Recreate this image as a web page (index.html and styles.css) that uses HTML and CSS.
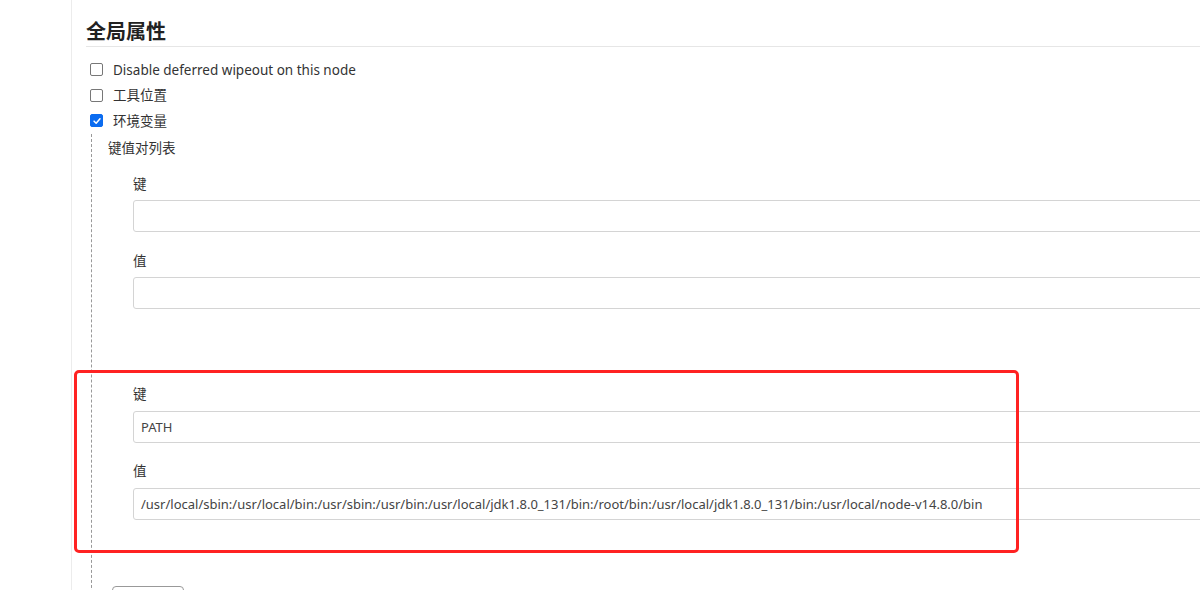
FILE: index.html
```html
<!DOCTYPE html>
<html lang="zh">
<head>
<meta charset="utf-8">
<title>全局属性</title>
<link rel="stylesheet" href="styles.css">
</head>
<body>
<div class="page">
  <div class="content">
    <h2 class="section-title">全局属性</h2>
    <div class="check-row"><span class="cb"></span><span class="cb-label">Disable deferred wipeout on this node</span></div>
    <div class="check-row"><span class="cb"></span><span class="cb-label">工具位置</span></div>
    <div class="check-row"><span class="cb checked"><svg viewBox="0 0 12 12" width="10" height="10"><path d="M2.5 6.2 L5 8.6 L9.6 3.4" fill="none" stroke="#fff" stroke-width="1.8" stroke-linecap="round" stroke-linejoin="round"/></svg></span><span class="cb-label">环境变量</span></div>
    <div class="env-block">
      <div class="list-title">键值对列表</div>
      <div class="pair">
        <div class="field-label">键</div>
        <div class="input"></div>
        <div class="field-label">值</div>
        <div class="input"></div>
      </div>
      <div class="pair pair-second">
        <div class="field-label">键</div>
        <div class="input">PATH</div>
        <div class="field-label">值</div>
        <div class="input">/usr/local/sbin:/usr/local/bin:/usr/sbin:/usr/bin:/usr/local/jdk1.8.0_131/bin:/root/bin:/usr/local/jdk1.8.0_131/bin:/usr/local/node-v14.8.0/bin</div>
        <div class="highlight"></div>
      </div>
      <div class="add-btn"></div>
    </div>
  </div>
</div>
</body>
</html>
```
FILE: styles.css
```css
html, body {
  margin: 0;
  padding: 0;
  background: #fff;
  overflow: hidden;
}
body {
  width: 1200px;
  height: 590px;
  font-family: "Noto Sans", "Noto Sans CJK SC", sans-serif;
  color: #333;
  font-size: 13.5px;
}
.page {
  margin-left: 71px;
  border-left: 1px solid #ececec;
  height: 590px;
  box-sizing: border-box;
}
.content {
  padding-left: 14px;
  padding-top: 17px;
}
.section-title {
  margin: 0 0 10px 0;
  font-size: 20px;
  font-weight: 700;
  line-height: 28px;
  color: #222;
  padding-bottom: 1px;
  border-bottom: 1px solid #e6e6e6;
  font-family: "Noto Sans CJK SC", sans-serif;
}
.check-row {
  display: flex;
  align-items: center;
  height: 25.5px;
  padding-left: 4px;
}
.cb {
  width: 11px;
  height: 11px;
  border: 1px solid #777;
  border-radius: 2px;
  box-sizing: content-box;
  display: flex;
  align-items: center;
  justify-content: center;
  margin-right: 10px;
}
.cb.checked {
  background: #0b6cf0;
  border-color: #0b6cf0;
}
.cb-label {
  line-height: 20px;
}
.env-block {
  margin-left: 5px;
  border-left: 1px dashed #999;
  padding-left: 16px;
  padding-top: 4px;
  height: 470px;
}
.list-title {
  line-height: 20px;
  margin-bottom: 16px;
}
.pair {
  padding-left: 25px;
  position: relative;
}
.field-label {
  line-height: 20px;
  height: 20px;
  margin-bottom: 6px;
}
.input {
  width: 1100px;
  height: 32px;
  box-sizing: border-box;
  border: 1px solid #d4d4d4;
  border-radius: 3px;
  margin-bottom: 19px;
  padding-left: 7px;
  line-height: 30px;
  font-size: 13px;
  color: #444;
  white-space: nowrap;
}
.pair-second {
  margin-top: 75px;
}
.pair-second .field-label {
  margin-bottom: 7px;
}
.pair-second .input {
  margin-bottom: 18px;
}
.highlight {
  position: absolute;
  left: -34px;
  top: -14px;
  width: 939px;
  height: 177px;
  border: 3px solid #f22;
  border-radius: 5px;
}
.add-btn {
  margin-left: 4px;
  margin-top: 66px;
  width: 70px;
  height: 30px;
  border: 1px solid #999;
  border-radius: 4px;
}
```
